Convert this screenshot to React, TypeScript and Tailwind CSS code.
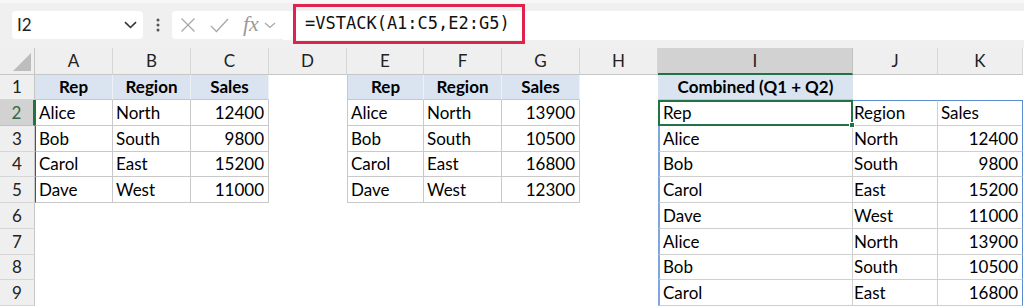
import React from "react";

const FONT = { fontFamily: "Lato, 'Open Sans', sans-serif" };

const leftTable: string[][] = [
  ["Rep", "Region", "Sales"],
  ["Alice", "North", "12400"],
  ["Bob", "South", "9800"],
  ["Carol", "East", "15200"],
  ["Dave", "West", "11000"],
];
const rightTable: string[][] = [
  ["Rep", "Region", "Sales"],
  ["Alice", "North", "13900"],
  ["Bob", "South", "10500"],
  ["Carol", "East", "16800"],
  ["Dave", "West", "12300"],
];
const spill: string[][] = [
  ["Rep", "Region", "Sales"],
  ["Alice", "North", "12400"],
  ["Bob", "South", "9800"],
  ["Carol", "East", "15200"],
  ["Dave", "West", "11000"],
  ["Alice", "North", "13900"],
  ["Bob", "South", "10500"],
  ["Carol", "East", "16800"],
];

const colLetters = ["A", "B", "C", "D", "E", "F", "G", "H", "I", "J", "K"];

function TableCell({ r, c }: { r: number; c: number }) {
  if (c <= 2 && r <= 5) {
    const v = leftTable[r - 1][c];
    if (r === 1) {
      return (
        <div className="flex items-center justify-center bg-[#dae4f0] border-r border-b border-r-[#eef2f7] border-b-[#c3c8cf] font-bold">
          {v}
        </div>
      );
    }
    if (c === 2) {
      return (
        <div className="flex items-center justify-end pr-[4px] border-r border-b border-[#c9c9c9]">{v}</div>
      );
    }
    if (c === 0) {
      return (
        <div className="flex items-center pl-[3px] border-l border-r border-b border-[#c9c9c9] border-l-[#217346]">
          {v}
        </div>
      );
    }
    return <div className="flex items-center pl-[3px] border-r border-b border-[#c9c9c9]">{v}</div>;
  }
  if (c >= 4 && c <= 6 && r <= 5) {
    const v = rightTable[r - 1][c - 4];
    if (r === 1) {
      return (
        <div
          className={
            c === 4
              ? "flex items-center justify-center bg-[#dae4f0] border-l border-r border-b border-l-[#c9c9c9] border-r-[#eef2f7] border-b-[#c3c8cf] font-bold"
              : "flex items-center justify-center bg-[#dae4f0] border-r border-b border-r-[#eef2f7] border-b-[#c3c8cf] font-bold"
          }
        >
          {v}
        </div>
      );
    }
    if (c === 6) {
      return (
        <div className="flex items-center justify-end pr-[4px] border-r border-b border-[#c9c9c9]">{v}</div>
      );
    }
    if (c === 4) {
      return <div className="flex items-center pl-[3px] border-l border-r border-b border-[#c9c9c9]">{v}</div>;
    }
    return <div className="flex items-center pl-[3px] border-r border-b border-[#c9c9c9]">{v}</div>;
  }
  if (c === 8 && r === 1) {
    return (
      <div className="flex items-center justify-center bg-[#dae4f0] font-bold border-b border-[#c3c8cf]">
        Combined (Q1 + Q2)
      </div>
    );
  }
  if (c >= 8 && r >= 2) {
    const v = spill[r - 2][c - 8];
    if (c === 8 && r === 2) {
      return (
        <div className="relative flex items-center pl-[3px] border-2 border-[#217346]">
          {v}
          <div className="absolute -right-[4px] -bottom-[4px] w-[6px] h-[6px] bg-[#217346] border border-white" />
        </div>
      );
    }
    if (c === 8) {
      return (
        <div className="flex items-center pl-[3px] border-l-2 border-r border-b border-l-[#7ea6dc] border-r-[#cfcfcf] border-b-[#cfcfcf]">
          {v}
        </div>
      );
    }
    if (c === 9) {
      return (
        <div
          className={
            r === 2
              ? "flex items-center pl-[1px] border-t border-r border-b border-t-[#5b8bd0] border-r-[#cfcfcf] border-b-[#cfcfcf]"
              : "flex items-center pl-[1px] border-r border-b border-[#cfcfcf]"
          }
        >
          {v}
        </div>
      );
    }
    if (r === 2) {
      return (
        <div className="flex items-center pl-[3px] border-t border-r border-b border-t-[#5b8bd0] border-r-[#5b8bd0] border-b-[#cfcfcf]">
          {v}
        </div>
      );
    }
    return (
      <div className="flex items-center justify-end pr-[4px] border-r border-b border-r-[#5b8bd0] border-b-[#cfcfcf]">
        {v}
      </div>
    );
  }
  return <div />;
}

function ColHeader({ letter }: { letter: string }) {
  if (letter === "I") {
    return (
      <div className="flex items-center justify-center bg-[#d2d2d2] border-r border-[#c0c0c0] border-b-2 border-b-[#217346] text-[#222]">
        {letter}
      </div>
    );
  }
  return (
    <div className="flex items-center justify-center bg-[#efefef] border-r border-b border-r-[#d6d6d6] border-b-[#c6c6c6] text-[#222]">
      {letter}
    </div>
  );
}

function RowHeader({ n }: { n: number }) {
  if (n === 2) {
    return (
      <div className="flex items-center justify-center bg-[#d2d2d2] border-b border-b-[#c0c0c0] border-r-2 border-r-[#217346] text-[#2d6b45]">
        {n}
      </div>
    );
  }
  return (
    <div className="flex items-center justify-center bg-[#efefef] border-b border-r border-b-[#d6d6d6] border-r-[#c6c6c6] text-[#222]">
      {n}
    </div>
  );
}

export default function App() {
  const rows = [1, 2, 3, 4, 5, 6, 7, 8, 9];
  return (
    <div className="w-[1024px] h-[307px] overflow-hidden bg-white text-[17px] text-black" style={FONT}>
      <div className="h-[48px] bg-[#f0f0f0] border-t-[3px] border-[#f7f7f7] flex items-start pt-[8px]">
        <div className="ml-[12px] w-[131px] h-[28px] bg-white rounded-[4px] flex items-center justify-between pl-[5px] pr-[6px]">
          <span className="text-[17px] text-[#222]">I2</span>
          <svg width="13" height="8" viewBox="0 0 13 8" fill="none" stroke="#333" strokeWidth="1.6">
            <path d="M1 1.2 L6.5 6.5 L12 1.2" />
          </svg>
        </div>
        <div className="w-[29px] h-[28px] flex items-center justify-center">
          <svg width="4" height="14" viewBox="0 0 4 14" fill="#555">
            <circle cx="2" cy="2" r="1.5" />
            <circle cx="2" cy="7" r="1.5" />
            <circle cx="2" cy="12" r="1.5" />
          </svg>
        </div>
        <div className="w-[111px] h-[28px] bg-white rounded-l-[4px] flex items-center pl-[8px]">
          <svg width="16" height="16" viewBox="0 0 16 16" fill="none" stroke="#a8a8a8" strokeWidth="1.3">
            <path d="M1.5 1.5 L14.5 14.5 M14.5 1.5 L1.5 14.5" />
          </svg>
          <svg className="ml-[14px]" width="19" height="15" viewBox="0 0 19 15" fill="none" stroke="#a8a8a8" strokeWidth="1.3">
            <path d="M1 8 L6.5 13.5 L18 1" />
          </svg>
          <span
            className="ml-[14px] text-[22px] italic text-[#9a9a9a] leading-none -mt-[3px]"
            style={{ fontFamily: "'Liberation Serif', serif" }}
          >
            fx
          </span>
          <svg className="ml-[5px]" width="12" height="7" viewBox="0 0 12 7" fill="none" stroke="#a8a8a8" strokeWidth="1.3">
            <path d="M1 1 L6 5.5 L11 1" />
          </svg>
        </div>
        <div className="flex-1 h-[29px] bg-white flex items-center">
          <div
            className="ml-[10px] -mt-[8px] -mb-[4px] h-[40px] w-[232px] border-[3px] border-[#e0224e] flex items-center pl-[9px] text-[17px] text-[#111]"
            style={{ fontFamily: "'DejaVu Sans Mono', 'Liberation Mono', monospace" }}
          >
            =VSTACK(A1:C5,E2:G5)
          </div>
        </div>
      </div>

      <div
        className="grid"
        style={{
          gridTemplateColumns: "35px 78px 78px 78px 78px 77px 78px 78px 78px 195px 85px 85px",
          gridTemplateRows: "27px 25px 26px 26px 25px 26px 26px 26px 25px 26px",
        }}
      >
        <div className="bg-[#efefef] border-r border-b border-r-[#c6c6c6] border-b-[#c6c6c6] flex items-end justify-end p-[3px]">
          <svg width="18" height="18" viewBox="0 0 18 18">
            <path d="M18 0 L18 18 L0 18 Z" fill="#bdbdbd" />
          </svg>
        </div>
        {colLetters.map((l) => (
          <ColHeader key={l} letter={l} />
        ))}
        {rows.map((r) => (
          <React.Fragment key={r}>
            <RowHeader n={r} />
            {colLetters.map((_, c) => (
              <TableCell key={c} r={r} c={c} />
            ))}
          </React.Fragment>
        ))}
      </div>
    </div>
  );
}
